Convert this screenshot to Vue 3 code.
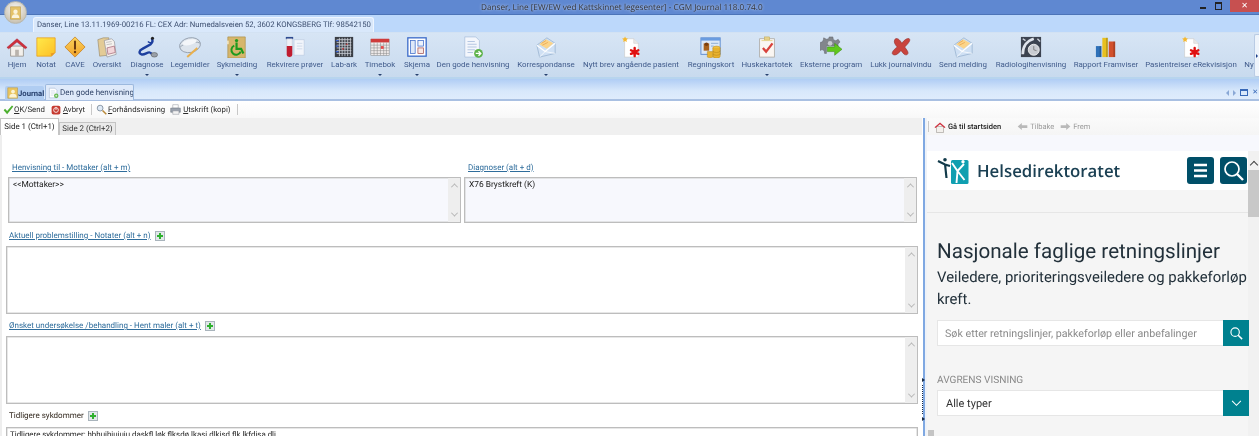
<script setup>
const page = `<path d="M5 3h10l5 5v15H5z" fill="#fff" stroke="#ccc" stroke-width=".7"/><path d="M15 3v5h5" fill="#e8e8e8" stroke="#ccc" stroke-width=".6"/><path d="M5.500 .5l1 2 2.200.3-1.600 1.500.4 2.200-2-1.100-2 1.100.4-2.200L2.300 2.800l2.200-.3z" fill="#f5b82e"/><g stroke="#e01010" stroke-width="2.600" stroke-linecap="round"><path d="M16 13v9M12 15.500l8 4M20 15.500l-8 4"/></g>`
const envelope = `<path d="M2 10L13 2l9 6v11L5 23z" fill="#cfe0f4" stroke="#8da9c8" stroke-width=".7"/><path d="M4.500 9L12 3.500 20 8l-7 6z" fill="#fbd48a"/><path d="M7 8l5-3M8 10l6-3" stroke="#e8a24a" stroke-width=".8"/><path d="M2 10l9 7 11-9" fill="none" stroke="#fff" stroke-width="1.300"/><path d="M5 23l6-6M22 19l-11-2" stroke="#fff" stroke-width=".8"/>`
const items = [
  { label: 'Hjem', w: 24, svg: `<path d="M5 11h14v11H5z" fill="#f3f0ec" stroke="#8c8680" stroke-width=".8"/><path d="M10 15h4v7h-4z" fill="#b9b3ad"/><path d="M1 12.500L12 3l11 9.500-2 1.500-9-7.500L3 14z" fill="#cf2f3c" stroke="#a32030" stroke-width=".5"/>` },
  { label: 'Notat', w: 34, svg: `<path d="M2 2h20v16l-4 4H2z" fill="url(#noteG)" stroke="#e79b1c" stroke-width=".8"/><path d="M22 18l-4 4-1-3z" fill="#e89a26"/>` },
  { label: 'CAVE', w: 24, svg: `<path d="M12 1l11 11-11 11L1 12z" fill="url(#caveG)" stroke="#c77a16" stroke-width=".8"/><path d="M12 6v8" stroke="#6b3a10" stroke-width="2.200" stroke-linecap="round"/><circle cx="12" cy="17.500" r="1.300" fill="#6b3a10"/>` },
  { label: 'Oversikt', w: 40, svg: `<path d="M2 4l6-2h6l-1 19-9 1z" fill="#e3cb96" stroke="#9a8a6a" stroke-width=".7"/><path d="M9 5l8-2 3 3 2 14-10 3z" fill="#f6f2ee" stroke="#8f8f94" stroke-width=".7"/><path d="M12 13l8-2 1 7-8 2z" fill="#f3d6da" stroke="#a36a78" stroke-width=".8"/><path d="M11 7l6-1M11.500 9.500l6-1" stroke="#aaa" stroke-width=".7"/>` },
  { label: 'Diagnose', w: 40, drop: true, svg: `<path d="M17 3c2 2 1 4-1 6l-9 5c-4 2-4 5-1 6s7-3 9-2c1.500 .6 2 1.500 3 2" fill="none" stroke="#1d3f9e" stroke-width="2.600"/><path d="M13 6c1 1 2 2 4 1" fill="none" stroke="#1d3f9e" stroke-width="1.800"/><circle cx="18" cy="2.500" r="1.700" fill="#222"/><ellipse cx="20" cy="20.500" rx="3.500" ry="2.500" fill="#9aa0a8" stroke="#555" stroke-width=".6"/>` },
  { label: 'Legemidler', w: 46, svg: `<g transform="rotate(-12 12 10)"><ellipse cx="12" cy="10" rx="11.500" ry="8" fill="#dde4ec" stroke="#8f9aa8" stroke-width=".9"/><path d="M1 10c5-4 17-4 22 0" fill="none" stroke="#8f9aa8" stroke-width=".9"/><ellipse cx="12" cy="6.800" rx="8" ry="3" fill="#f4f6f9"/></g><path d="M9 23l11-10" stroke="#e9b04e" stroke-width="2.200"/>` },
  { label: 'Sykmelding', w: 48, drop: true, svg: `<path d="M2 1h19v23H2z" fill="#d6b66c" stroke="#a98b44" stroke-width=".7"/><path d="M1 5h2v4H1z" fill="#efe3c2"/><circle cx="11.500" cy="5" r="1.800" fill="#1f9a1f"/><path d="M11.500 7v7h5l2.500 5" fill="none" stroke="#1f9a1f" stroke-width="2.400"/><path d="M9 10.500a5.200 5.200 0 1 0 7 6.500" fill="none" stroke="#1f9a1f" stroke-width="2.200"/>` },
  { label: 'Rekvirere prøver', w: 68, svg: `<path d="M11 4h11v17H11z" fill="#f2f5fb" stroke="#b4c4dc" stroke-width=".6"/><path d="M14 8h6M14 11h6M14 14h6" stroke="#c5d2e4" stroke-width=".8"/><rect x="2" y="1" width="8" height="2.500" fill="#2d4a90"/><path d="M3 3h6v17a3 3 0 0 1-6 0z" fill="#eef0f6" stroke="#b9bfcc" stroke-width=".5"/><path d="M3 11h6v9a3 3 0 0 1-6 0z" fill="#c01c30"/>` },
  { label: 'Lab-ark', w: 30, svg: `<rect x="2" y="1" width="20" height="22" fill="#3b3f46"/><path d="M4 4h16M4 7h16M4 10h16M4 13h16M4 16h16M4 19h16M7 2v20M10 2v20M13 2v20M16 2v20M19 2v20" stroke="#c9ced6" stroke-width=".9"/><path d="M3 5h3M3 11h3M3 17h3" stroke="#3c63d0" stroke-width="1.200"/><path d="M14 9h2M10 14h2" stroke="#c53030" stroke-width="1.200"/>` },
  { label: 'Timebok', w: 42, drop: true, svg: `<rect x="2" y="4" width="20" height="17" fill="#f2eeee" stroke="#8a8a8a" stroke-width=".6"/><rect x="2" y="3" width="20" height="4" fill="#cf3b3b"/><path d="M2 10h20M2 13h20M2 16h20M2 19h20M5.500 7v14M9 7v14M12.500 7v14M16 7v14M19 7v14" stroke="#8a8a8a" stroke-width=".6"/><rect x="13" y="11" width="3" height="3" fill="#e54848"/>` },
  { label: 'Skjema', w: 32, drop: true, svg: `<rect x="2" y="2" width="20" height="20" fill="#fff" stroke="#3868c8" stroke-width="1.400"/><rect x="5" y="5" width="5" height="14" fill="#dfe9f8" stroke="#3868c8" stroke-width=".8"/><rect x="13" y="5" width="6" height="6" fill="#eef3fb" stroke="#3868c8" stroke-width=".8"/><rect x="13" y="13" width="6" height="6" fill="#f8e8e4" stroke="#a05050" stroke-width=".8"/>` },
  { label: 'Den gode henvisning', w: 80, svg: `<path d="M3 1h12l4 4v18H3z" fill="#f3f6fc" stroke="#a9bfdc" stroke-width=".8"/><path d="M6 6h8M6 9h10M6 12h10M6 15h8M6 18h6" stroke="#a8bcdc" stroke-width=".9"/><circle cx="18" cy="19" r="4.800" fill="#5eb34c"/><path d="M15 19h5M18 16.500l2.500 2.500-2.500 2.500" fill="none" stroke="#fff" stroke-width="1.500"/>` },
  { label: 'Korrespondanse', w: 66, drop: true, svg: envelope },
  { label: 'Nytt brev angående pasient', w: 104, svg: page },
  { label: 'Regningskort', w: 56, svg: `<rect x="1" y="2" width="21" height="18" fill="#dce8f8" stroke="#5a8ad0" stroke-width="1"/><rect x="1" y="2" width="21" height="3" fill="#6a9ce0"/><rect x="4" y="8" width="6" height="8" fill="#a8601c"/><circle cx="7" cy="9" r="2" fill="#7a3e10"/><path d="M12 8h8M12 11h3" stroke="#8aa8d0" stroke-width="1"/><ellipse cx="18" cy="13" rx="4" ry="2" fill="#f0c040" stroke="#b58416" stroke-width=".5"/><path d="M14 13v9a4 2 0 0 0 8 0v-9" fill="#e8b230" stroke="#b58416" stroke-width=".5"/><path d="M14 16a4 2 0 0 0 8 0M14 19a4 2 0 0 0 8 0" fill="none" stroke="#b58416" stroke-width=".6"/><path d="M8 17v6a3.500 1.500 0 0 0 6 0v-6z" fill="#e8b230" stroke="#b58416" stroke-width=".5"/>` },
  { label: 'Huskekartotek', w: 56, drop: true, svg: `<rect x="4" y="3" width="16" height="20" fill="#faf6f2" stroke="#a8a49c" stroke-width=".8"/><rect x="9" y="1" width="6" height="3.500" fill="#e6d28a" stroke="#b8a050" stroke-width=".5"/><path d="M6 5h12" stroke="#e6d28a" stroke-width="1"/><path d="M7.500 13l3.500 4 7-9" fill="none" stroke="#d8423c" stroke-width="2.500"/>` },
  { label: 'Eksterne program', w: 72, svg: `<path d="M10 1h4l.6 3 2.600 1.200 2.600-1.600 2 3-2.200 2 .2 2.400H7v8H5l-.4-3-2.400-1.200-2 1V7l2.400-.6L3.700 4 4 2l3 1.500L9.400 3z" fill="#82868c" stroke="#5a5d62" stroke-width=".5"/><circle cx="11" cy="8" r="2.500" fill="#c9ccd0"/><path d="M8 12h8V8l8 6.500-8 6.500v-4H8z" fill="#60c81c" stroke="#3d8e10" stroke-width=".6"/>` },
  { label: 'Lukk journalvindu', w: 68, svg: `<path d="M6 3c3-1 5 2 7 5 2-3 5-6 8-5 2 2-2 6-5 9 2 3 5 6 3 8-3 2-5-2-7-4-3 3-6 6-9 4-2-2 2-6 5-8C6 10 3 6 6 3z" fill="#c9443e" stroke="#96302c" stroke-width=".7"/>` },
  { label: 'Send melding', w: 56, svg: envelope },
  { label: 'Radiologihenvisning', w: 80, svg: `<rect x="1" y="1" width="22" height="22" fill="#3c4350"/><path d="M3 20c0-9 5-15 12-17" fill="none" stroke="#dfe4ec" stroke-width="3"/><path d="M19 3l3 3M3 3l3 2" stroke="#cfd4dc" stroke-width="1.500"/><circle cx="15" cy="15" r="6" fill="#c9ccd2" stroke="#f0f0f0" stroke-width="1"/><path d="M15 11v4l3 1" fill="none" stroke="#666" stroke-width=".8"/>` },
  { label: 'Rapport Framviser', w: 70, svg: `<path d="M1 11h6v12H1z" fill="#2e70b8"/><path d="M8 2h6v21H8z" fill="#e8c020"/><path d="M15 6h7v17h-7z" fill="#d2502c"/><path d="M5 11h2v12H5zM12 2h2v21h-2zM20 6h2v17h-2z" fill="#000" opacity=".18"/>` },
  { label: 'Pasientreiser eRekvisisjon', w: 100, svg: page },
  { label: 'Ny', w: 16, svg: '' },
]
const fields = [
  { label: 'Aktuell problemstilling - Notater (alt + n)' },
  { label: 'Ønsket undersøkelse /behandling - Hent maler (alt + t)' },
]
</script>

<template>
  <div class="app">
    <svg class="defs" aria-hidden="true">
      <defs>
        <linearGradient id="noteG" x1="0" y1="0" x2="1" y2="1"><stop offset="0" stop-color="#ffe94a"/><stop offset="1" stop-color="#fdbf26"/></linearGradient>
        <linearGradient id="caveG" x1="0" y1="0" x2="0" y2="1"><stop offset="0" stop-color="#fbd35a"/><stop offset="1" stop-color="#f2a22a"/></linearGradient>
      </defs>
    </svg>

    <header class="titlebar">
      <span class="title">Danser, Line [EW/EW ved Kattskinnet legesenter] - CGM Journal 118.0.74.0</span>
      <div class="winbtns">
        <span class="wmin"></span>
        <span class="wmax"></span>
        <span class="wclose">✕</span>
      </div>
    </header>

    <div class="orb">
      <svg viewBox="0 0 24 24" width="15" height="16">
        <path d="M4 2h16v20H4z" fill="#e4c268" stroke="#b0913e" stroke-width=".8"/>
        <circle cx="12" cy="10" r="3.500" fill="#fbf4dc"/>
        <path d="M6 20c0-5 3-6 6-6s6 1 6 6z" fill="#fbf4dc"/>
      </svg>
    </div>

    <div class="patientstrip">
      <div class="patienttab">Danser, Line 13.11.1969-00216 FL: CEX Adr: Numedalsveien 52, 3602 KONGSBERG Tlf: 98542150</div>
    </div>

    <nav class="ribbon">
      <button v-for="it in items" :key="it.label" class="rb" :style="{ width: it.w + 'px' }">
        <svg class="rbicon" viewBox="0 0 24 24" width="22" height="22" v-html="it.svg"></svg>
        <span class="rblabel">{{ it.label }}</span>
        <span v-if="it.drop" class="rbdrop"></span>
      </button>
      <div class="rbmore"><span></span></div>
    </nav>

    <div class="doctabs">
      <div class="dtab">
        <svg viewBox="0 0 16 16" width="12" height="12"><path d="M1 1h13v14H1z" fill="#eac560" stroke="#b59440" stroke-width=".7"/><circle cx="8" cy="6" r="2.500" fill="#fbf3d6"/><path d="M3 14c0-4 2-5 5-5s5 1 5 5z" fill="#fbf3d6"/></svg>
        <b>Journal</b>
      </div>
      <div class="dtab active">
        <svg viewBox="0 0 16 16" width="11" height="12"><path d="M2 1h8l3 3v11H2z" fill="#fff" stroke="#9fb4d2" stroke-width=".8"/><path d="M4 5h6M4 8h7M4 11h4" stroke="#b5c6de" stroke-width=".8"/><circle cx="12" cy="12" r="3.200" fill="#62b84e"/><path d="M10.500 12h3M12 10.500v3" stroke="#fff" stroke-width=".9"/></svg>
        <span>Den gode henvisning</span>
      </div>
      <div class="dtabctl">
        <span class="tri l"></span><span class="tri r"></span>
        <span class="ctlwin"></span>
        <span class="ctlx">✕</span>
      </div>
    </div>

    <div class="toolbar">
      <span class="tool ok">
        <svg viewBox="0 0 16 16" width="11" height="11"><path d="M1 9l2-2 3 3 7-8 2 1.500L6 15z" fill="#4caf2e"/></svg>
        <span><u>O</u>K/Send</span>
      </span>
      <span class="tool">
        <svg viewBox="0 0 16 16" width="10" height="10"><rect x="1" y="1" width="14" height="14" rx="3" fill="#c63a30"/><circle cx="8" cy="8" r="3.800" fill="none" stroke="#fff" stroke-width="1.300"/><path d="M8 3v5" stroke="#fff" stroke-width="1.300"/></svg>
        <span><u>A</u>vbryt</span>
      </span>
      <i class="sep"></i>
      <span class="tool mag">
        <svg viewBox="0 0 16 16" width="11" height="11"><circle cx="6" cy="6" r="4.200" fill="#dfeaf6" stroke="#7a8898" stroke-width="1.200"/><path d="M9.500 9.500L15 15" stroke="#b98a3a" stroke-width="2.200"/></svg>
        <span><u>F</u>orhåndsvisning</span>
      </span>
      <span class="tool">
        <svg viewBox="0 0 16 16" width="11" height="11"><path d="M4 1h8v5H4z" fill="#fff" stroke="#8a8f98" stroke-width=".7"/><path d="M1 6h14v6H1z" fill="#9aa2ae" stroke="#616872" stroke-width=".7"/><path d="M4 10h9v5H4z" fill="#f2f2f2" stroke="#8a8f98" stroke-width=".7"/></svg>
        <span><u>U</u>tskrift (kopi)</span>
      </span>
      <i class="sep"></i>
    </div>

    <main class="body">
      <section class="left">
        <div class="subtabs">
          <div class="stab on">Side 1 (Ctrl+1)</div>
          <div class="stab">Side 2 (Ctrl+2)</div>
        </div>
        <div class="form">
          <div class="toprow">
            <div class="topcol">
              <a class="flabel">Henvisning til - Mottaker (alt + m)</a>
              <div class="box short">
                <span class="boxtext">&lt;&lt;Mottaker&gt;&gt;</span>
                <div class="sb"><span class="chev up"></span><span class="chev down"></span></div>
              </div>
            </div>
            <div class="topcol">
              <a class="flabel">Diagnoser (alt + d)</a>
              <div class="box short">
                <span class="boxtext">X76 Brystkreft (K)</span>
                <div class="sb"><span class="chev up"></span><span class="chev down"></span></div>
              </div>
            </div>
          </div>

          <div v-for="f in fields" :key="f.label" class="field">
            <div class="lrow">
              <a class="flabel">{{ f.label }}</a>
              <span class="plus"></span>
            </div>
            <div class="box tall">
              <div class="sb"><span class="chev up"></span><span class="chev down"></span></div>
            </div>
          </div>

          <div class="field lastfield">
            <div class="lrow">
              <span class="flabel plain">Tidligere sykdommer</span>
              <span class="plus"></span>
            </div>
            <div class="box last">
              <span class="boxtext">Tidligere sykdommer: hbhuihiuiuiu daskfl løk flksdø lkasi dlkisd flk lkfdisa dli</span>
            </div>
          </div>
        </div>
      </section>

      <div class="splitter">
        <span class="splitmark a"></span>
        <span class="splitdots"></span>
        <span class="splitmark b"></span>
      </div>

      <section class="right">
        <div class="webbar">
          <i class="sep light"></i>
          <span class="wtool strong">
            <svg viewBox="0 0 24 24" width="12" height="12"><path d="M5 11h14v12H5z" fill="#f3f0ec" stroke="#8c8680"/><path d="M1 12.500L12 3l11 9.500-2 1.500-9-7.500L3 14z" fill="#cf2f3c"/></svg>
            <span>Gå til startsiden</span>
          </span>
          <span class="wtool muted">
            <svg viewBox="0 0 16 12" width="11" height="9"><path d="M1 6l6-5v3h8v4H7v3z" fill="#b9b9b9"/></svg>
            <span>Tilbake</span>
          </span>
          <span class="wtool muted">
            <svg viewBox="0 0 16 12" width="11" height="9"><path d="M15 6L9 1v3H1v4h8v3z" fill="#b9b9b9"/></svg>
            <span>Frem</span>
          </span>
        </div>
        <div class="webband"></div>
        <div class="web">
          <div class="webmain">
            <div class="wheader">
              <svg class="logo" viewBox="0 0 32 26" width="32" height="26">
                <rect x="14" y="2" width="17.500" height="24" rx="1.500" fill="#0f9fb0"/>
                <path d="M1 3l7 3.500 5 1.500M8 6l1.500 14" fill="none" stroke="#123a4a" stroke-width="2.200"/>
                <circle cx="8" cy="1.800" r="1.800" fill="#123a4a"/>
                <path d="M15 5l5.500 8-1 12M20.500 13l6.500-7M20.500 13l7 9" fill="none" stroke="#fff" stroke-width="1.900"/>
                <circle cx="26" cy="3.800" r="1.700" fill="#fff"/>
              </svg>
              <span class="brand">Helsedirektoratet</span>
              <div class="hbtn">
                <svg viewBox="0 0 27 27" width="27" height="27"><path d="M7 8h13M7 13.500h13M7 19h13" stroke="#fff" stroke-width="2.400"/></svg>
              </div>
              <div class="hbtn">
                <svg viewBox="0 0 27 27" width="27" height="27"><circle cx="12" cy="12" r="7" fill="none" stroke="#fff" stroke-width="1.700"/><path d="M17 17l6 6" stroke="#fff" stroke-width="2.400"/></svg>
              </div>
            </div>
            <div class="crumb"></div>
            <div class="hero">
              <h1>Nasjonale faglige retningslinjer</h1>
              <p>Veiledere, prioriteringsveiledere og pakkeforløp<br>kreft.</p>
              <div class="inputrow">
                <span class="ph">Søk etter retningslinjer, pakkeforløp eller anbefalinger</span>
                <span class="tealbtn">
                  <svg viewBox="0 0 16 16" width="14" height="14"><circle cx="7" cy="7" r="4.800" fill="none" stroke="#fff" stroke-width="1.300"/><path d="M10.500 10.500L15 15" stroke="#fff" stroke-width="1.700"/></svg>
                </span>
              </div>
              <div class="avg">AVGRENS VISNING</div>
              <div class="inputrow sel">
                <span class="val">Alle typer</span>
                <span class="tealbtn">
                  <svg viewBox="0 0 12 8" width="11" height="7"><path d="M1 1l5 5 5-5" fill="none" stroke="#fff" stroke-width="1.200"/></svg>
                </span>
              </div>
            </div>
          </div>
          <div class="wscroll">
            <span class="wup"></span>
            <span class="wthumb"></span>
          </div>
          <span class="hthumb"></span>
        </div>
      </section>
    </main>
  </div>
</template>

<style>
html, body { margin: 0; background: #fff; overflow: hidden; }
</style>

<style scoped>
.app { position: relative; width: 1259px; height: 436px; overflow: hidden; display: flex; flex-direction: column; font-family: Roboto, "Open Sans", sans-serif; font-size: 8px; color: #222; background: #fff; filter: blur(.3px); text-rendering: geometricPrecision; }
.defs { position: absolute; width: 0; height: 0; }
svg { flex: none; }

.titlebar { height: 15px; flex: none; display: flex; align-items: center; background: #5f88d1; border-bottom: 1px solid #4c74b8; box-sizing: border-box; padding-left: 481px; }
.title { width: 640px; font-family: "Open Sans", sans-serif; font-size: 8.200px; color: #35353a; text-shadow: 0 0 3px #d8e2f2; white-space: nowrap; }
.winbtns { margin-left: auto; display: flex; align-items: flex-start; height: 100%; }
.wmin { width: 6px; height: 2px; background: #222; margin: 7px 9px 0 0; }
.wmax { width: 5px; height: 5px; border: 1px solid #222; border-top-width: 2px; margin: 2px 8px 0 0; }
.wclose { width: 29px; height: 12px; background: #c75050; color: #fff; text-align: center; font-size: 8px; line-height: 12px; }

.orb { position: absolute; left: 4px; top: 1px; width: 23px; height: 23px; border-radius: 50%; background: radial-gradient(circle at 50% 35%, #f8f8f8, #cfc8b8 70%, #a8a8a0); border: 1px solid #b8b8b0; display: flex; align-items: center; justify-content: center; box-sizing: border-box; z-index: 2; }

.patientstrip { height: 17px; flex: none; background: #bcd8fb; padding: 2px 0 0 33px; box-sizing: border-box; }
.patienttab { width: 341px; height: 15px; box-sizing: border-box; background: #d9e8fb; border: 1px solid #eef5fe; border-bottom: 0; border-radius: 3px 3px 0 0; font-size: 7.750px; line-height: 13px; padding-left: 3px; color: #3d4f70; white-space: nowrap; overflow: hidden; }

.ribbon { height: 47px; flex: none; box-sizing: border-box; display: flex; padding-left: 5px; background: linear-gradient(#d7e5f5, #c8daee); border-top: 1px solid #d3e2f3; border-bottom: 2px solid #b7d4ee; position: relative; overflow: hidden; }
.rb { flex: none; position: relative; height: 44px; border: 0; background: none; padding: 3px 0 0; margin: 0; font: inherit; display: flex; flex-direction: column; align-items: center; }
.rblabel { margin-top: 1px; font-size: 7.900px; line-height: 12px; color: #3f5a8a; white-space: nowrap; }
.rbdrop { position: absolute; bottom: 1px; left: 50%; margin-left: -2px; border: 2px solid transparent; border-top: 2px solid #27416f; border-bottom: 0; }
.rbmore { position: absolute; right: 0; top: 1px; width: 5px; height: 43px; box-sizing: border-box; background: #eef4fb; border: 1px solid #b9cbe4; border-right: 0; border-radius: 2px 0 0 2px; display: flex; align-items: center; justify-content: center; }
.rbmore span { border: 2px solid transparent; border-left: 2px solid #1d3f8a; border-right: 0; }

.doctabs { height: 22px; flex: none; box-sizing: border-box; background: linear-gradient(#b0cdf5, #d8e8fb 60%, #dfecfc); border-bottom: 2px solid #a9c0e2; padding: 6px 0 0 5px; display: flex; align-items: flex-end; gap: 1px; }
.dtab { height: 14px; width: 39px; display: flex; align-items: center; font-size: 8px; color: #33476b; box-sizing: border-box; background: #b0cdf2; border-radius: 2px 2px 0 0; padding-left: 2px; overflow: hidden; margin-bottom: -1px; white-space: nowrap; flex: none; }
.dtab b { margin-left: -1px; color: #27406d; font-weight: 700; font-size: 7.700px; }
.dtab.active { width: 89px; height: 16px; background: #dfeafa; border: 1px solid #9cb9de; border-bottom: 0; gap: 1px; }
.dtabctl { margin-left: auto; display: flex; align-items: center; gap: 4px; height: 13px; padding-right: 1px; }
.tri { border: 3px solid transparent; }
.tri.l { border-right: 3px solid #8aa8d6; border-left: 0; }
.tri.r { border-left: 3px solid #8aa8d6; border-right: 0; }
.ctlwin { width: 6px; height: 4px; border: 1px solid #3768b8; border-top-width: 2px; }
.ctlx { color: #3768b8; font-size: 7px; line-height: 1; }

.toolbar { height: 17px; flex: none; box-sizing: border-box; display: flex; align-items: center; padding-left: 3px; gap: 6px; background: linear-gradient(#fff, #f8f8f8); font-size: 7.800px; color: #2a2a2a; }
.tool { display: inline-flex; align-items: center; gap: 2px; white-space: nowrap; }
.tool.ok { gap: 0; }
.tool.mag { margin-left: -2px; gap: 1px; margin-right: -1px; }
.sep { width: 1px; height: 11px; background: #c8c8c8; display: block; }

.body { flex: 1; min-height: 0; display: flex; }
.left { width: 922px; flex: none; display: flex; flex-direction: column; border-left: 2px solid #eee; box-sizing: border-box; }
.subtabs { height: 17px; flex: none; display: flex; background: #f0f0f0; align-items: flex-end; margin-left: -2px; }
.stab { width: 57px; height: 13px; box-sizing: border-box; background: #eaeaea; border: 1px solid #c4c4c4; border-bottom: 0; font-size: 7.900px; line-height: 12px; text-align: center; color: #333; white-space: nowrap; }
.stab.on { width: 59px; height: 17px; background: #fff; line-height: 15px; border-bottom: 0; color: #222; }
.form { flex: 1; min-height: 0; padding: 25px 4px 0 4px; display: flex; flex-direction: column; overflow: hidden; background: #fff; }
.toprow { display: flex; gap: 3px; padding: 0 1px 0 2px; margin-bottom: 1px; }
.topcol { flex: 1; min-width: 0; }
.topcol .flabel { display: block; padding-left: 4px; height: 17px; line-height: 15px; }
.flabel { font-size: 8px; color: #2f6d9c; text-decoration: underline; white-space: nowrap; }
.flabel.plain { color: #33291f; text-decoration: none; }
.box { position: relative; border: 1px solid #bdbdbd; box-shadow: inset 0 0 0 .5px #d0d0d0; box-sizing: border-box; background: #f7f8fd; }
.box.short { height: 46px; padding: 2px 4px; }
.box.tall { height: 68px; background: #fff; }
.box.last { height: 40px; background: #fff; padding: 1px 3px; }
.boxtext { font-size: 8.400px; line-height: 11px; color: #222; white-space: nowrap; display: block; }
.box.last .boxtext { font-size: 7.900px; }
.sb { position: absolute; right: 0; top: 0; bottom: 0; width: 12px; background: #eeeeee; display: flex; flex-direction: column; justify-content: space-between; align-items: center; padding: 5px 0; box-sizing: border-box; }
.chev { width: 4px; height: 4px; border-left: 1px solid #b4b4b4; border-top: 1px solid #b4b4b4; box-sizing: content-box; }
.chev.up { transform: rotate(45deg) translate(1px, 1px); }
.chev.down { transform: rotate(225deg) translate(1px, 1px); }
.field { flex: none; }
.lastfield { margin-top: 1px; }
.lastfield .lrow { padding: 0 0 1px 3px; }
.lrow { height: 22px; display: flex; align-items: center; gap: 4px; padding: 1px 0 0 3px; box-sizing: border-box; }
.plus { width: 10px; height: 10px; box-sizing: border-box; border: 1px solid #a9b4bc; background: #e2e8ea; position: relative; display: block; }
.plus::before { content: ""; position: absolute; left: 1px; top: 3px; width: 6px; height: 2px; background: #2fb02f; }
.plus::after { content: ""; position: absolute; left: 3px; top: 1px; width: 2px; height: 6px; background: #2fb02f; }

.splitter { width: 5px; flex: none; position: relative; background: linear-gradient(90deg, #fff 0, #fff 1px, #7fa8e2 1px, #7fa8e2 3px, #eef2f8 3px); }
.splitmark { position: absolute; left: 0; border: 2px solid transparent; border-left: 3px solid #1a2a44; border-right: 0; }
.splitmark.a { top: 260px; }
.splitmark.b { top: 299px; }
.splitdots { position: absolute; left: 0; top: 267px; height: 29px; border-left: 1px dotted #1a2a44; }

.right { flex: 1; min-width: 0; display: flex; flex-direction: column; background: #f7f8fd; }
.webbar { height: 17px; flex: none; display: flex; align-items: center; font-size: 7.500px; padding-left: 1px; background: linear-gradient(#fafafa, #f5f5f5); }
.sep.light { margin-right: 5px; }
.wtool { display: inline-flex; align-items: center; gap: 2px; white-space: nowrap; }
.wtool.strong { color: #222; margin-right: 16px; font-weight: 500; }
.wtool.muted { color: #9b9b9b; margin-right: 6px; }
.webband { height: 16px; flex: none; }
.web { flex: 1; min-height: 0; display: flex; position: relative; overflow: hidden; }
.webmain { width: 321px; flex: none; background: #f5f5f5; display: flex; flex-direction: column; position: relative; z-index: 1; }
.wheader { height: 39px; flex: none; background: #fff; display: flex; align-items: center; padding: 0 1px 0 10px; box-sizing: border-box; }
.brand { margin-left: 8px; font-family: "Open Sans", sans-serif; font-weight: 600; font-size: 16.800px; color: #1b4053; flex: 1; white-space: nowrap; }
.hbtn { width: 27px; height: 27px; background: #004f68; border-radius: 3px; margin-left: 6px; flex: none; margin-top: -1px; }
.hbtn:first-of-type { margin-left: 0; }
.crumb { height: 23px; flex: none; border-bottom: 1px solid #e6e6e6; box-sizing: border-box; }
.hero { padding: 26px 0 0 10px; }
h1 { margin: 0; font-family: Roboto, sans-serif; font-weight: 400; font-size: 20.600px; line-height: 26px; color: #22303a; white-space: nowrap; }
p { margin: 1px 0 0; font-family: Roboto, sans-serif; font-size: 14.900px; line-height: 22px; color: #22303a; white-space: nowrap; }
.inputrow { margin-top: 10px; width: 312px; height: 26px; box-sizing: border-box; background: #fff; border: 1px solid #e6e6e6; display: flex; align-items: center; font-family: Roboto, sans-serif; font-size: 10.700px; }
.ph { color: #8a8a8a; padding-left: 7px; flex: 1; white-space: nowrap; }
.val { color: #333; padding-left: 8px; flex: 1; font-size: 11px; }
.tealbtn { width: 26px; height: 26px; margin: -1px; background: #00818f; display: flex; align-items: center; justify-content: center; flex: none; }
.avg { margin-top: 28px; font-family: Roboto, sans-serif; font-size: 10.100px; color: #8a8a8a; line-height: 14px; }
.inputrow.sel { margin-top: 2px; }
.wscroll { flex: 1; background: #f1f1f1; position: relative; display: flex; flex-direction: column; align-items: center; }
.wup { width: 5px; height: 5px; margin-top: 11px; border-left: 1px solid #444; border-top: 1px solid #444; transform: rotate(45deg); }
.wthumb { width: 100%; height: 47px; margin-top: 2px; background: #c8c8c8; }
.hthumb { position: absolute; left: 1px; bottom: 0; width: 6px; height: 6px; background: #c4c4c4; z-index: 2; }
</style>
